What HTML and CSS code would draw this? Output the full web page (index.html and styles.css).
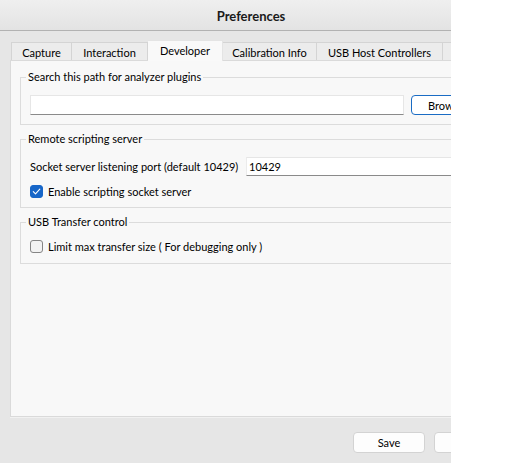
FILE: index.html
```html
<!DOCTYPE html>
<html>
<head>
<meta charset="utf-8">
<title>Preferences</title>
<link rel="stylesheet" href="styles.css">
</head>
<body>
<div class="window">
  <div class="dialog">
    <div class="titlebar">Preferences</div>
    <div class="content">
      <div class="tabs">
        <div class="tab tab-capture">Capture</div>
        <div class="tab tab-interaction">Interaction</div>
        <div class="tab tab-developer active">Developer</div>
        <div class="tab tab-calibration">Calibration Info</div>
        <div class="tab tab-usb">USB Host Controllers</div>
        <div class="tab tab-more"></div>
      </div>
      <div class="pane">
        <fieldset class="group">
          <legend>Search this path for analyzer plugins</legend>
          <div class="group-body body-path">
            <div class="row">
              <div class="input input-path"></div>
              <div class="button button-browse">Browse...</div>
            </div>
          </div>
        </fieldset>
        <fieldset class="group">
          <legend>Remote scripting server</legend>
          <div class="group-body body-remote">
            <div class="row row-port">
              <span class="label-port">Socket server listening port (default 10429)</span>
              <div class="input input-port">10429</div>
            </div>
            <label class="check-row">
              <span class="checkbox checked">
                <svg width="9" height="9" viewBox="0 0 9 9"><path d="M1.3 4.7 L3.5 6.8 L7.8 2.2" fill="none" stroke="#fff" stroke-width="1.1" stroke-linecap="round" stroke-linejoin="round"/></svg>
              </span>
              <span>Enable scripting socket server</span>
            </label>
          </div>
        </fieldset>
        <fieldset class="group">
          <legend>USB Transfer control</legend>
          <div class="group-body body-usb">
            <label class="check-row">
              <span class="checkbox"></span>
              <span>Limit max transfer size ( For debugging only )</span>
            </label>
          </div>
        </fieldset>
      </div>
    </div>
    <div class="footer">
      <div class="button button-footer">Save</div>
      <div class="button button-footer">Cancel</div>
    </div>
  </div>
</div>
</body>
</html>
```
FILE: styles.css
```css
* { box-sizing: border-box; }
html, body { margin: 0; padding: 0; background: #ffffff; }
body {
  font-family: "Lato", "Noto Sans", sans-serif;
  font-size: 11px;
  color: #000000;
}
.window {
  width: 451px;
  height: 463px;
  overflow: hidden;
  background: #e6e6e6;
}
.dialog {
  width: 516px;
  display: flex;
  flex-direction: column;
}
.titlebar {
  width: 502px;
  height: 31px;
  border-bottom: 1px solid #b2b2b2;
  background: linear-gradient(#efefef, #e3e3e3);
  display: flex;
  align-items: center;
  justify-content: center;
  font-size: 13px;
  font-weight: 700;
  color: #1a1a1a;
  padding-top: 1px;
}
.content {
  padding: 9px 0 0 10px;
}
.tabs {
  display: flex;
  align-items: flex-end;
  height: 20px;
  padding-left: 1px;
}
.tab {
  height: 18px;
  border: 1px solid #d4d4d4;
  border-bottom: none;
  border-left: none;
  background: #ececec;
  display: flex;
  align-items: center;
  justify-content: center;
  white-space: nowrap;
  color: #000000;
  padding-top: 1px;
}
.tab-capture { width: 61px; border-left: 1px solid #d4d4d4; }
.tab-interaction { width: 76px; }
.tab-developer { width: 75px; }
.tab-calibration { width: 94px; }
.tab-usb { width: 126px; }
.tab-more { width: 70px; }
.tab.active {
  height: 21px;
  margin-bottom: -1px;
  background: #f9f9f9;
  border-color: #e4e4e4;
  border-left: none;
  position: relative;
  z-index: 1;
  padding-top: 0;
  padding-bottom: 2px;
}
.pane {
  width: 500px;
  height: 357px;
  background: #f8f8f8;
  border: 1px solid #dadada;
  padding: 8px 9px;
  box-shadow: 0 1px 0 #f1f1f1;
}
.group {
  margin: 0 0 6px 0;
  padding: 0 9px;
  border: 1px solid #dcdcdc;
  min-width: 0;
}
.group legend {
  padding: 0 2px;
  margin-left: -4px;
  line-height: 16px;
  height: 16px;
}
.body-path { padding: 10px 0 9px; }
.body-remote { padding: 10px 0 6px; }
.body-usb { padding: 6px 0 7px; }
.row {
  display: flex;
  align-items: center;
}
.input {
  background: #ffffff;
  border: 1px solid #e6e6e6;
  border-bottom: 1px solid #8a8a8a;
  display: flex;
  align-items: center;
  padding-left: 2px;
}
.input-path {
  width: 374px;
  height: 20px;
}
.button {
  height: 20px;
  background: #fdfdfd;
  border: 1px solid #d0d0d0;
  border-radius: 4px;
  display: flex;
  align-items: center;
  justify-content: center;
  white-space: nowrap;
  color: #000000;
}
.button-browse {
  width: 78px;
  margin-left: 7px;
  border: 1px solid #1a6cc4;
  background: #ffffff;
}
.row-port { height: 19px; }
.label-port {
  flex: 0 0 216px;
  white-space: nowrap;
}
.input-port {
  flex: 1;
  height: 19px;
  border-left-color: #ebebeb;
}
.check-row {
  display: flex;
  align-items: center;
  height: 20px;
  gap: 5px;
}
.body-remote .check-row { margin-top: 5px; }
.checkbox {
  width: 13px;
  height: 13px;
  border-radius: 3px;
  border: 1px solid #858585;
  background: #f2f2f2;
  display: flex;
  align-items: center;
  justify-content: center;
  flex: 0 0 13px;
}
.checkbox.checked {
  background: #1766c8;
  border-color: #1766c8;
}
.footer {
  display: flex;
  justify-content: flex-end;
  gap: 9px;
  padding: 15px 10px 0 0;
}
.button-footer {
  width: 72px;
  height: 21px;
  border-color: #d3d3d3;
}
```
